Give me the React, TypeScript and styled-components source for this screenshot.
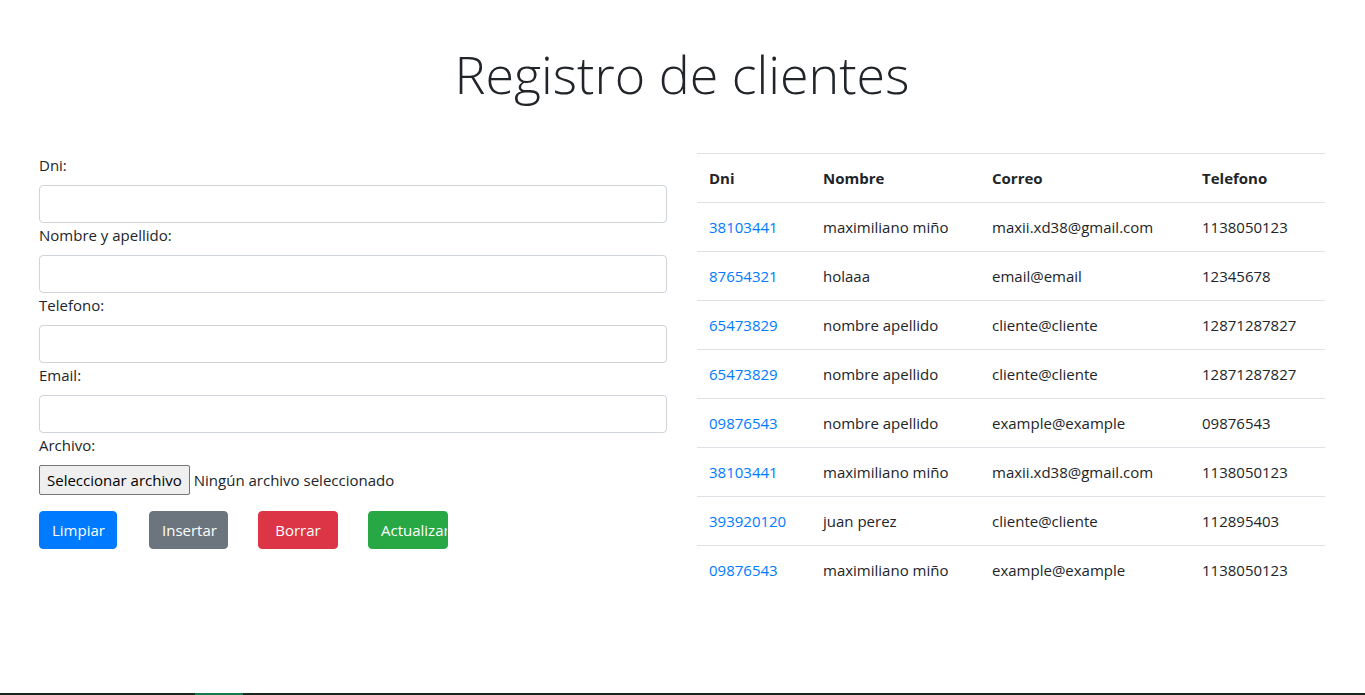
import React from "react";
import styled, { createGlobalStyle } from "styled-components";

const GlobalStyle = createGlobalStyle`
  * { box-sizing: border-box; }
  html, body { margin: 0; padding: 0; background: #fff; }
  body {
    font-family: "Open Sans", "Noto Sans", "Liberation Sans", sans-serif;
    font-size: 15px;
    line-height: 24px;
    color: #212529;
  }
`;

const Page = styled.div`
  min-height: 100vh;
  display: flex;
  flex-direction: column;
`;

const Main = styled.main`
  flex: 1;
  padding: 0 40px 0 39px;
`;

const Title = styled.h1`
  margin: 40px 0 46px;
  text-align: center;
  font-size: 52px;
  font-weight: 300;
  line-height: 67px;
  color: #212529;
`;

const Row = styled.div`
  display: grid;
  grid-template-columns: 1fr 1fr;
  column-gap: 30px;
`;

const Form = styled.form`
  display: flex;
  flex-direction: column;
`;

const Label = styled.label`
  display: block;
  margin-bottom: 8px;
  line-height: 24px;
`;

const Input = styled.input`
  display: block;
  width: 100%;
  height: 38px;
  padding: 6px 12px;
  border: 1px solid #ced4da;
  border-radius: 4px;
  font: inherit;
  color: #495057;
  background: #fff;
`;

const FileRow = styled.div`
  display: flex;
  align-items: center;
  gap: 4px;
  height: 30px;
`;

const FileButton = styled.button`
  height: 30px;
  padding: 0 7px;
  background: #efefef;
  border: 1px solid #767676;
  border-radius: 2px;
  font: inherit;
  font-size: 15px;
  color: #000;
`;

const FileText = styled.span`
  font-size: 15px;
`;

const Buttons = styled.div`
  display: grid;
  grid-template-columns: 110px 109px 110px 80px;
  justify-items: start;
  margin-top: 16px;
`;

const colors: Record<string, string> = {
  primary: "#007bff",
  secondary: "#6c757d",
  danger: "#dc3545",
  success: "#28a745",
};

const Btn = styled.button<{ $variant: string; $width: number }>`
  width: ${(p) => p.$width}px;
  height: 38px;
  padding: 6px 12px;
  border: 1px solid ${(p) => colors[p.$variant]};
  border-radius: 4px;
  background: ${(p) => colors[p.$variant]};
  color: #fff;
  font: inherit;
  white-space: nowrap;
  overflow: hidden;
  text-align: left;
`;

const BtnLabel = styled.span`
  display: block;
  text-align: center;
`;

const Table = styled.table`
  width: 100%;
  border-collapse: collapse;
  table-layout: fixed;
`;

const Th = styled.th`
  text-align: left;
  font-weight: 700;
  padding: 12px;
  border-top: 1px solid #dee2e6;
  border-bottom: 1px solid #dee2e6;
  vertical-align: top;
`;

const Td = styled.td`
  padding: 12px;
  border-top: 1px solid #dee2e6;
  vertical-align: top;
  white-space: nowrap;
`;

const Link = styled.a`
  color: #007bff;
  text-decoration: none;
`;

const Taskbar = styled.div`
  height: 2px;
  background: #17291f;
  display: flex;
`;

const TaskIndicator = styled.div`
  margin-left: 195px;
  width: 48px;
  background: #137a4b;
`;

const rows = [
  ["38103441", "maximiliano miño", "maxii.xd38@gmail.com", "1138050123"],
  ["87654321", "holaaa", "email@email", "12345678"],
  ["65473829", "nombre apellido", "cliente@cliente", "12871287827"],
  ["65473829", "nombre apellido", "cliente@cliente", "12871287827"],
  ["09876543", "nombre apellido", "example@example", "09876543"],
  ["38103441", "maximiliano miño", "maxii.xd38@gmail.com", "1138050123"],
  ["393920120", "juan perez", "cliente@cliente", "112895403"],
  ["09876543", "maximiliano miño", "example@example", "1138050123"],
];

export default function App() {
  return (
    <Page>
      <GlobalStyle />
      <Main>
        <Title>Registro de clientes</Title>
        <Row>
          <Form onSubmit={(e) => e.preventDefault()}>
            <Label>Dni:</Label>
            <Input type="text" />
            <Label>Nombre y apellido:</Label>
            <Input type="text" />
            <Label>Telefono:</Label>
            <Input type="text" />
            <Label>Email:</Label>
            <Input type="text" />
            <Label>Archivo:</Label>
            <FileRow>
              <FileButton type="button">Seleccionar archivo</FileButton>
              <FileText>Ningún archivo seleccionado</FileText>
            </FileRow>
            <Buttons>
              <Btn type="button" $variant="primary" $width={78}>
                <BtnLabel>Limpiar</BtnLabel>
              </Btn>
              <Btn type="button" $variant="secondary" $width={79}>
                <BtnLabel>Insertar</BtnLabel>
              </Btn>
              <Btn type="button" $variant="danger" $width={80}>
                <BtnLabel>Borrar</BtnLabel>
              </Btn>
              <Btn type="button" $variant="success" $width={80}>
                <BtnLabel>Actualizar</BtnLabel>
              </Btn>
            </Buttons>
          </Form>
          <Table>
            <colgroup>
              <col style={{ width: 114 }} />
              <col style={{ width: 169 }} />
              <col style={{ width: 210 }} />
              <col style={{ width: 135 }} />
            </colgroup>
            <thead>
              <tr>
                <Th>Dni</Th>
                <Th>Nombre</Th>
                <Th>Correo</Th>
                <Th>Telefono</Th>
              </tr>
            </thead>
            <tbody>
              {rows.map((r, i) => (
                <tr key={i}>
                  <Td>
                    <Link href="#">{r[0]}</Link>
                  </Td>
                  <Td>{r[1]}</Td>
                  <Td>{r[2]}</Td>
                  <Td>{r[3]}</Td>
                </tr>
              ))}
            </tbody>
          </Table>
        </Row>
      </Main>
      <Taskbar>
        <TaskIndicator />
      </Taskbar>
    </Page>
  );
}
